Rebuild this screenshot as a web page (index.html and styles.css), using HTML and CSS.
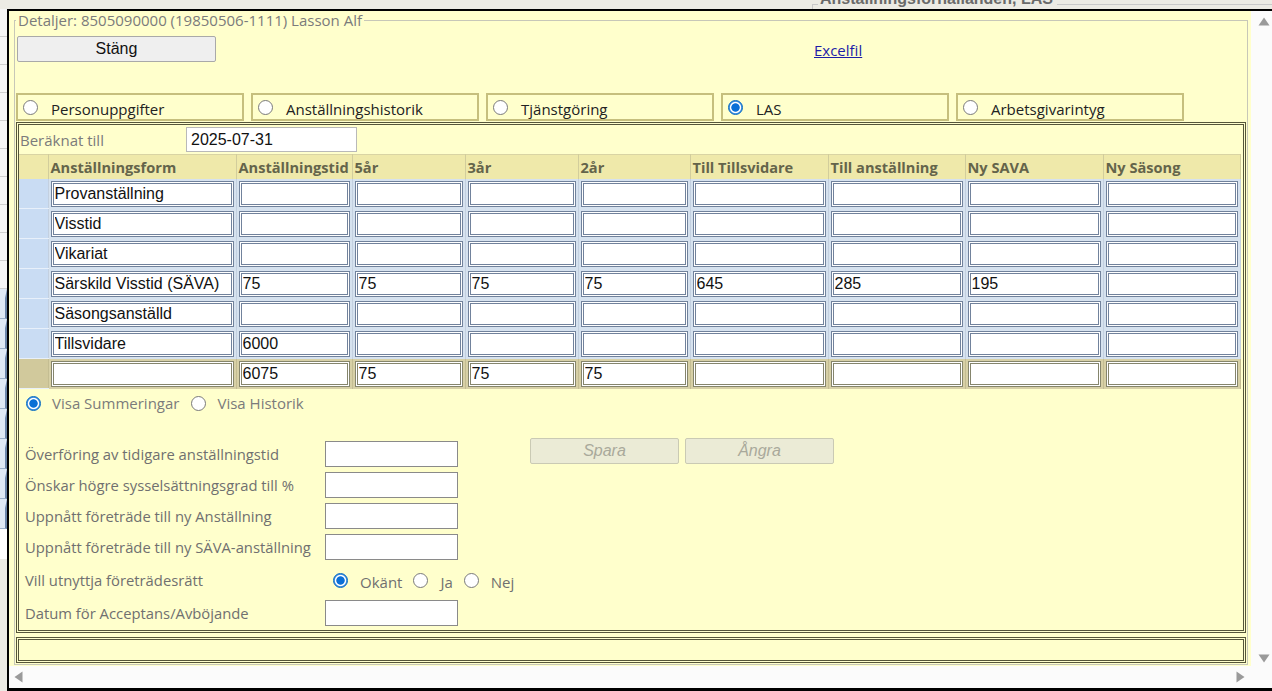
FILE: index.html
```html
<!DOCTYPE html>
<html lang="sv">
<head>
<meta charset="utf-8">
<title>Detaljer</title>
<link rel="stylesheet" href="styles.css">
</head>
<body>
<div class="backdrop">
  <div class="bd-top">
    <span class="bd-tick"></span>
    <span class="bd-legend">Anställningsförhållanden, LAS</span>
    <span class="bd-line"></span>
  </div>
  <div class="bd-left">
    <div class="bd-cell"></div><div class="bd-cell"></div><div class="bd-cell"></div>
    <div class="bd-cell"></div><div class="bd-cell"></div><div class="bd-cell"></div>
    <div class="bd-cell"></div><div class="bd-cell"></div><div class="bd-cell"></div>
    <div class="bd-cell"></div>
    <div class="bd-g"></div><div class="bd-g"></div><div class="bd-g"></div><div class="bd-g"></div>
    <div class="bd-g"></div><div class="bd-g"></div><div class="bd-g"></div><div class="bd-g"></div>
    <div class="bd-white"></div>
    <div class="bd-dark"></div>
  </div>
</div>

<div class="dialog">
  <div class="dlg-content">
    <fieldset class="details">
      <legend class="details-legend">Detaljer: 8505090000 (19850506-1111) Lasson Alf</legend>
      <div class="toprow">
        <button class="btn-close" type="button">Stäng</button>
        <a class="excel" href="#">Excelfil</a>
      </div>
      <div class="tabs">
        <label class="tab"><input type="radio" name="tab" class="rb"><span>Personuppgifter</span></label>
        <label class="tab"><input type="radio" name="tab" class="rb"><span>Anställningshistorik</span></label>
        <label class="tab"><input type="radio" name="tab" class="rb"><span>Tjänstgöring</span></label>
        <label class="tab"><input type="radio" name="tab" class="rb" checked><span>LAS</span></label>
        <label class="tab"><input type="radio" name="tab" class="rb"><span>Arbetsgivarintyg</span></label>
      </div>

      <div class="panel">
        <div class="calc-row">
          <span class="calc-label">Beräknat till</span>
          <input class="calc-input" type="text" value="2025-07-31">
        </div>

        <table class="las">
          <colgroup>
            <col class="c-rh"><col class="c-form"><col class="c-tid"><col class="c-5"><col class="c-3"><col class="c-2">
            <col class="c-tv"><col class="c-ta"><col class="c-sava"><col class="c-sas">
          </colgroup>
          <thead>
            <tr>
              <th></th><th>Anställningsform</th><th>Anställningstid</th><th>5år</th><th>3år</th><th>2år</th>
              <th>Till Tillsvidare</th><th>Till anställning</th><th>Ny SAVA</th><th>Ny Säsong</th>
            </tr>
          </thead>
          <tbody>
            <tr>
              <td class="rh"></td><td><input class="ci" value="Provanställning"></td><td><input class="ci"></td><td><input class="ci"></td><td><input class="ci"></td><td><input class="ci"></td><td><input class="ci"></td><td><input class="ci"></td><td><input class="ci"></td><td><input class="ci"></td>
            </tr>
            <tr>
              <td class="rh"></td><td><input class="ci" value="Visstid"></td><td><input class="ci"></td><td><input class="ci"></td><td><input class="ci"></td><td><input class="ci"></td><td><input class="ci"></td><td><input class="ci"></td><td><input class="ci"></td><td><input class="ci"></td>
            </tr>
            <tr>
              <td class="rh"></td><td><input class="ci" value="Vikariat"></td><td><input class="ci"></td><td><input class="ci"></td><td><input class="ci"></td><td><input class="ci"></td><td><input class="ci"></td><td><input class="ci"></td><td><input class="ci"></td><td><input class="ci"></td>
            </tr>
            <tr>
              <td class="rh"></td><td><input class="ci" value="Särskild Visstid (SÄVA)"></td><td><input class="ci" value="75"></td><td><input class="ci" value="75"></td><td><input class="ci" value="75"></td><td><input class="ci" value="75"></td><td><input class="ci" value="645"></td><td><input class="ci" value="285"></td><td><input class="ci" value="195"></td><td><input class="ci"></td>
            </tr>
            <tr>
              <td class="rh"></td><td><input class="ci" value="Säsongsanställd"></td><td><input class="ci"></td><td><input class="ci"></td><td><input class="ci"></td><td><input class="ci"></td><td><input class="ci"></td><td><input class="ci"></td><td><input class="ci"></td><td><input class="ci"></td>
            </tr>
            <tr>
              <td class="rh"></td><td><input class="ci" value="Tillsvidare"></td><td><input class="ci" value="6000"></td><td><input class="ci"></td><td><input class="ci"></td><td><input class="ci"></td><td><input class="ci"></td><td><input class="ci"></td><td><input class="ci"></td><td><input class="ci"></td>
            </tr>
            <tr class="sum">
              <td class="rh"></td><td><input class="ci"></td><td><input class="ci" value="6075"></td><td><input class="ci" value="75"></td><td><input class="ci" value="75"></td><td><input class="ci" value="75"></td><td><input class="ci"></td><td><input class="ci"></td><td><input class="ci"></td><td><input class="ci"></td>
            </tr>
          </tbody>
        </table>

        <div class="view-row">
          <label class="opt"><input type="radio" name="view" class="rb" checked><span>Visa Summeringar</span></label>
          <label class="opt"><input type="radio" name="view" class="rb"><span>Visa Historik</span></label>
        </div>

        <div class="form-area">
          <div class="form-grid">
            <span class="flabel">Överföring av tidigare anställningstid</span><input class="finput" type="text">
            <span class="flabel">Önskar högre sysselsättningsgrad till %</span><input class="finput" type="text">
            <span class="flabel">Uppnått företräde till ny Anställning</span><input class="finput" type="text">
            <span class="flabel">Uppnått företräde till ny SÄVA-anställning</span><input class="finput" type="text">
            <span class="flabel">Vill utnyttja företrädesrätt</span>
            <span class="fradios">
              <label class="opt2"><input type="radio" name="fr" class="rb" checked><span>Okänt</span></label>
              <label class="opt2"><input type="radio" name="fr" class="rb"><span>Ja</span></label>
              <label class="opt2"><input type="radio" name="fr" class="rb"><span>Nej</span></label>
            </span>
            <span class="flabel">Datum för Acceptans/Avböjande</span><input class="finput" type="text">
          </div>
          <div class="actions">
            <button class="btn-dis" type="button" disabled>Spara</button>
            <button class="btn-dis" type="button" disabled>Ångra</button>
          </div>
        </div>
      </div>

      <div class="footer-box"></div>
    </fieldset>
  </div>
  <div class="vscroll">
    <svg class="arr" width="12" height="9" viewBox="0 0 12 9"><path d="M6 0.5 L11.5 8.5 L0.5 8.5 Z" fill="#9a9a9a"/></svg>
    <svg class="arr" width="12" height="9" viewBox="0 0 12 9"><path d="M0.5 0.5 L11.5 0.5 L6 8.5 Z" fill="#9a9a9a"/></svg>
  </div>
  <div class="hscroll">
    <svg class="arr" width="9" height="12" viewBox="0 0 9 12"><path d="M8.5 0.5 L8.5 11.5 L0.5 6 Z" fill="#9a9a9a"/></svg>
    <svg class="arr" width="9" height="12" viewBox="0 0 9 12"><path d="M0.5 0.5 L8.5 6 L0.5 11.5 Z" fill="#9a9a9a"/></svg>
  </div>
  <div class="corner"></div>
</div>
</body>
</html>
```

FILE: styles.css
```css
* { box-sizing: border-box; }
html, body { margin: 0; padding: 0; }
body {
  width: 1272px;
  height: 691px;
  overflow: hidden;
  position: relative;
  background: #ecebe4;
  font-family: "Open Sans", "Noto Sans", sans-serif;
}

/* ---------- backdrop page (behind the dialog) ---------- */
.backdrop { width: 1272px; height: 691px; }
.bd-top {
  height: 9px;
  overflow: hidden;
  display: flex;
  align-items: flex-start;
  padding-left: 812px;
}
.bd-tick { width: 6px; height: 5px; border-top: 1px solid #c9c9c9; border-left: 1px solid #c9c9c9; margin-top: 4px; }
.bd-legend {
  font-family: "Liberation Sans", Arial, sans-serif;
  font-weight: bold;
  font-size: 16px;
  line-height: 18px;
  color: #6a6a6a;
  margin-top: -10px;
  padding: 0 4px 0 2px;
}
.bd-line { flex: 1; border-top: 1px solid #c9c9c9; margin-top: 4px; }
.bd-left {
  width: 7px;
  display: flex;
  flex-direction: column;
  background: #f3f3f3;
}
.bd-cell { height: 28px; border-bottom: 1px solid #cfcfcf; background: #f5f5f5; }
.bd-g {
  height: 30px;
  background: #dfe9f5;
  border-bottom: 1px solid #9fb3cc;
  border-right: 2px solid #6d87aa;
  border-top: 9px solid #dfe9f5;
}
.bd-white { height: 30px; background: #ffffff; }
.bd-dark { flex: 1; background: #9a9a9a; }

/* ---------- dialog ---------- */
.dialog {
  position: absolute;
  left: 7px;
  top: 9px;
  width: 1267px;
  height: 682px;
  border: 2px solid #000;
  border-bottom-width: 3px;
  background: #fbfbfb;
  display: grid;
  grid-template-columns: 1242px 21px;
  grid-template-rows: 655px 22px;
}
.dlg-content {
  background: #ffffcc;
  overflow: hidden;
  padding: 0 3px 0 5px;
}
.vscroll {
  background: #fbfbfb;
  display: flex;
  flex-direction: column;
  justify-content: space-between;
  align-items: center;
  padding: 6px 0 3px 5px;
}
.hscroll {
  background: #fbfbfb;
  display: flex;
  justify-content: space-between;
  align-items: center;
  padding: 0 6px 1px 5px;
}
.corner { background: #fbfbfb; }
.arr { display: block; }

/* ---------- details fieldset ---------- */
.details {
  margin: 0;
  padding: 0 1px 0 1px;
  border: 1px solid #c7c7b8;
  min-width: 0;
}
.details-legend {
  padding: 0 2px;
  font-size: 15px;
  line-height: 18px;
  color: #7b7b7b;
}
.toprow {
  height: 64px;
  display: flex;
  align-items: flex-start;
  padding-top: 7px;
  padding-left: 1px;
}
.btn-close {
  width: 199px;
  height: 26px;
  background: #efefef;
  border: 1px solid #a9a9a9;
  border-radius: 2px;
  font-family: "Liberation Sans", Arial, sans-serif;
  font-size: 16px;
  color: #111;
  padding: 0;
}
.excel {
  margin-left: 598px;
  margin-top: 4px;
  font-size: 15px;
  line-height: 20px;
  color: #1d1da8;
  text-decoration: underline;
}

/* ---------- tabs ---------- */
.tabs {
  display: flex;
  gap: 7px;
  height: 28px;
}
.tab {
  width: 228px;
  height: 28px;
  border: 2px solid #c6bf7d;
  display: flex;
  align-items: center;
  font-size: 15px;
  color: #222;
}
.tab span { margin-left: 13px; margin-top: 3px; }
.tab .rb { margin-left: 5px; }

/* radio buttons */
.rb {
  appearance: none;
  -webkit-appearance: none;
  width: 15px;
  height: 15px;
  margin: 0;
  border: 1px solid #7a7a7a;
  border-radius: 50%;
  background: #fff;
  flex: none;
}
.rb:checked {
  border: 1px solid #0067c0;
  background: radial-gradient(circle, #0a6fd6 0, #0a6fd6 3.8px, #ffffff 4.6px, #ffffff 5.2px, #4c96e6 6px);
}

/* ---------- main panel ---------- */
.panel {
  margin-top: 1px;
  height: 511px;
  border: 3px double #55553a;
}
.calc-row {
  display: flex;
  align-items: center;
  height: 29px;
  padding-left: 1px;
}
.calc-label {
  width: 166px;
  font-size: 15px;
  color: #7b7b7b;
}
.calc-input {
  width: 171px;
  height: 25px;
  border: 1px solid #b9b9b9;
  background: #fff;
  font-family: "Liberation Sans", Arial, sans-serif;
  font-size: 16px;
  color: #111;
  padding: 0 4px;
  margin: 0;
}

/* ---------- LAS table ---------- */
.las {
  width: 1221px;
  table-layout: fixed;
  border-collapse: collapse;
  border-spacing: 0;
}
.c-rh { width: 29px; }
.c-form { width: 188px; }
.c-tid { width: 116px; }
.c-5 { width: 113px; }
.c-3 { width: 113px; }
.c-2 { width: 112px; }
.c-tv { width: 138px; }
.c-ta { width: 137px; }
.c-sava { width: 138px; }
.c-sas { width: 137px; }

.las th {
  height: 24px;
  padding: 0 0 0 2px;
  background: #efe9aa;
  border-right: 1px solid #d2cd9c;
  border-top: 1px solid #d9d4a4;
  text-align: left;
  font-size: 14.6px;
  font-weight: bold;
  color: #64644a;
  white-space: nowrap;
  overflow: hidden;
}
.las td {
  height: 30px;
  padding: 2px;
  background: #d6e2ef;
  border-right: 1px solid #c3d0e0;
}
.las td.rh {
  background: #c9dcf3;
  border-bottom: 1px solid #e8f0fa;
}
.ci {
  display: block;
  width: 100%;
  height: 26px;
  margin: 0;
  border: 3px double #71829c;
  background: #fff;
  font-family: "Liberation Sans", Arial, sans-serif;
  font-size: 16px;
  color: #111;
  padding: 0 1px;
}
.las tr.sum td { background: #d7d0a6; border-right-color: #c4bd92; }
.las tr.sum td.rh { background: #d1c99c; }
.las tr.sum .ci { border-color: #85856c; }

/* ---------- view options ---------- */
.view-row {
  height: 28px;
  display: flex;
  align-items: center;
  padding-left: 7px;
  gap: 0;
}
.opt { display: flex; align-items: center; font-size: 15px; color: #7b7b7b; }
.opt span { margin-left: 11px; margin-right: 12px; }

/* ---------- form ---------- */
.form-area {
  display: flex;
  align-items: flex-start;
  padding: 21px 0 0 6px;
}
.form-grid {
  margin-top: 3px;
  display: grid;
  grid-template-columns: 300px 133px;
  grid-template-rows: 26px 26px 26px 26px 30px 26px;
  row-gap: 5px;
  align-items: center;
}
.flabel {
  font-size: 14.8px;
  color: #707070;
  white-space: nowrap;
}
.finput {
  width: 133px;
  height: 26px;
  margin: 0;
  border: 1px solid #8a8a8a;
  background: #fff;
}
.fradios {
  display: flex;
  align-items: center;
  white-space: nowrap;
  padding-left: 8px;
  width: 200px;
}
.opt2 { display: flex; align-items: center; font-size: 15px; color: #707070; }
.opt2 span { margin-left: 12px; margin-right: 11px; margin-top: 4px; }
.actions {
  display: flex;
  gap: 6px;
  margin-left: 72px;
}
.btn-dis {
  width: 149px;
  height: 26px;
  padding: 0;
  background: #ebebd6;
  border: 1px solid #cacab4;
  border-radius: 2px;
  font-family: "Liberation Sans", Arial, sans-serif;
  font-style: italic;
  font-size: 16px;
  color: #a9a99b;
}

.footer-box {
  margin-top: 4px;
  height: 26px;
  border: 3px double #55553a;
  margin-bottom: 1px;
}
```
